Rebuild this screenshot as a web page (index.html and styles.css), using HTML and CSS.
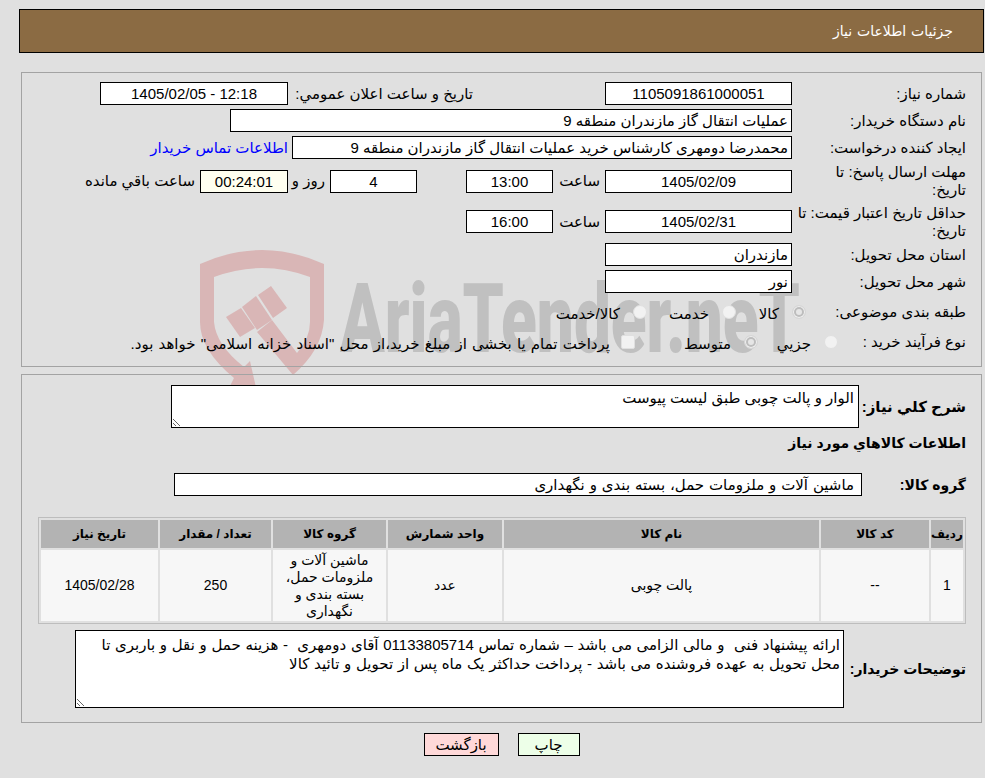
FILE: index.html
```html
<!DOCTYPE html>
<html lang="fa" dir="rtl">
<head>
<meta charset="utf-8">
<title>جزئیات اطلاعات نیاز</title>
<link rel="stylesheet" href="styles.css">
</head>
<body>
<svg class="watermark" viewBox="0 0 985 778" aria-hidden="true">
  <path class="wm-pink" d="M200 264 Q262 236 324 264 L324 320 Q322 350 293 375 L257 332 L272 320 L297 353 Q310 338 310 322 L310 277 Q262 259 214 277 L214 322 Q216 345 244 367 L250 361 L257 392 L228 390 L234 378 Q200 350 200 322 Z"/>
  <path class="wm-pink" d="M226 317 L241 308 L255 328 L240 337 Z"/>
  <path class="wm-pink" d="M242 307 L256 296 L272 320 L257 330 Z"/>
  <path class="wm-pink" d="M258 295 L271 286 L287 308 L273 318 Z"/>
  <text class="wm-text" x="340" y="352" textLength="460" lengthAdjust="spacingAndGlyphs" direction="ltr">AriaTender.neT</text>
</svg>
<div class="page">
  <header class="title-bar"><h1 class="title">جزئیات اطلاعات نیاز</h1></header>
  <main class="content">
    <section class="panel panel-info">
      <div class="row">
        <div class="label">شماره نیاز:</div>
        <div class="field center w187">1105091861000051</div>
        <div class="pub-label">تاریخ و ساعت اعلان عمومي:</div>
        <div class="field center w188">12:18 - 1405/02/05</div>
      </div>
      <div class="row">
        <div class="label">نام دستگاه خریدار:</div>
        <div class="field w562">عملیات انتقال گاز مازندران منطقه 9</div>
      </div>
      <div class="row">
        <div class="label">ایجاد کننده درخواست:</div>
        <div class="field w500">محمدرضا دومهری کارشناس خرید عملیات انتقال گاز مازندران منطقه 9</div>
        <a class="contact" href="#">اطلاعات تماس خریدار</a>
      </div>
      <div class="row row-tall">
        <div class="label label-wrap">مهلت ارسال پاسخ: تا تاریخ:</div>
        <div class="field center w187">1405/02/09</div>
        <div class="time-label">ساعت</div>
        <div class="field center w87">13:00</div>
        <div class="field center w87 days">4</div>
        <div class="days-label">روز و</div>
        <div class="field center w88 remain">00:24:01</div>
        <div class="remain-label">ساعت باقي مانده</div>
      </div>
      <div class="row row-tall row-tall-2">
        <div class="label">حداقل تاریخ اعتبار قیمت: تا تاریخ:</div>
        <div class="field center w187">1405/02/31</div>
        <div class="time-label">ساعت</div>
        <div class="field center w87">16:00</div>
      </div>
      <div class="row">
        <div class="label">استان محل تحویل:</div>
        <div class="field w187">مازندران</div>
      </div>
      <div class="row">
        <div class="label">شهر محل تحویل:</div>
        <div class="field w187">نور</div>
      </div>
      <div class="row row-option row-first">
        <div class="label label-cat">طبقه بندی موضوعی:</div>
        <label class="opt opt-70"><input class="radio" type="radio" name="cat" checked disabled><span>کالا</span></label>
        <label class="opt opt-89"><input class="radio" type="radio" name="cat" disabled><span>خدمت</span></label>
        <label class="opt"><input class="radio" type="radio" name="cat" disabled><span>کالا/خدمت</span></label>
      </div>
      <div class="row row-option">
        <div class="label label-proc">نوع فرآیند خرید :</div>
        <label class="opt opt-80"><input class="radio" type="radio" name="proc" disabled><span>جزیي</span></label>
        <label class="opt opt-123"><input class="radio" type="radio" name="proc" checked disabled><span>متوسط</span></label>
        <label class="opt opt-long"><input class="check" type="checkbox" disabled><span>پرداخت تمام یا بخشی از مبلغ خرید،از محل "اسناد خزانه اسلامی" خواهد بود.</span></label>
      </div>
    </section>

    <section class="panel panel-goods">
      <div class="row row-desc">
        <div class="label-b">شرح کلي نیاز:</div>
        <textarea class="area area-desc" readonly>الوار و پالت چوبی طبق لیست پیوست</textarea>
      </div>
      <h2 class="section-head">اطلاعات کالاهاي مورد نیاز</h2>
      <div class="row row-group">
        <div class="label-b label-group">گروه کالا:</div>
        <div class="field w688 group-field">ماشین آلات و ملزومات حمل، بسته بندی و نگهداری</div>
      </div>
      <div class="table-wrap">
        <table class="goods">
          <colgroup>
            <col class="c-a"><col class="c-b"><col class="c-c"><col class="c-d"><col class="c-e"><col class="c-f"><col class="c-g">
          </colgroup>
          <thead>
            <tr><th>ردیف</th><th>کد کالا</th><th>نام کالا</th><th>واحد شمارش</th><th>گروه کالا</th><th>تعداد / مقدار</th><th>تاریخ نیاز</th></tr>
          </thead>
          <tbody>
            <tr><td>1</td><td>--</td><td>پالت چوبی</td><td>عدد</td><td>ماشین آلات و ملزومات حمل، بسته بندی و نگهداری</td><td>250</td><td>1405/02/28</td></tr>
          </tbody>
        </table>
      </div>
      <div class="row row-notes">
        <div class="label-b label-notes">توضیحات خریدار:</div>
        <textarea class="area area-notes" readonly>ارائه پیشنهاد فنی  و مالی الزامی می باشد – شماره تماس 01133805714 آقای دومهری  - هزینه حمل و نقل و باربری تا محل تحویل به عهده فروشنده می باشد - پرداخت حداکثر یک ماه پس از تحویل و تائید کالا</textarea>
      </div>
    </section>

    <div class="actions">
      <button class="btn btn-print" type="button">چاپ</button>
      <button class="btn btn-back" type="button">بازگشت</button>
    </div>
  </main>
</div>
</body>
</html>
```
FILE: styles.css
```css
* { box-sizing: border-box; }
html, body { margin: 0; padding: 0; height: 778px; overflow: hidden; }
body {
  position: relative;
  background: #e0e0e0;
  color: #000;
  font-family: "Liberation Sans", "DejaVu Sans", sans-serif;
  font-size: 15px;
}
.watermark { position: absolute; left: 0; top: 0; width: 985px; height: 778px; }
.wm-pink { fill: #d9b6b6; }
.wm-text { fill: #c0c0c0; font-family: Roboto, sans-serif; font-weight: 900; font-size: 97px; }
.page { position: relative; padding: 9px 1px 0 19px; }
.title-bar {
  height: 44px;
  background: #8b6b43;
  border: 1px solid #000;
  display: flex;
  align-items: center;
  padding-right: 30px;
}
.title { margin: 0; color: #fff; font-size: 14px; font-weight: 400; word-spacing: 1px; }
.content { margin: 19px 2px 0 2px; }
.panel { border: 1px solid #a3a3a3; display: flex; flex-direction: column; }
.panel-info { height: 295px; padding: 9px 15px 0 0; gap: 4px; }
.panel-goods { height: 349px; margin-top: 7px; padding: 10px 15px 0 0; }
.row { display: flex; align-items: center; height: 23px; }
.row-tall { height: 34px; margin: 1px 0; }
.row-tall-2 { height: 35px; margin-bottom: 0; }
.row-option { height: 26px; }
.row-first { margin-top: 2px; }
.label { width: 174px; line-height: 18px; flex: none; }
.label-wrap { padding-left: 14px; }
.label-cat { width: 160px; }
.label-proc { width: 128px; }
.field {
  height: 23px;
  line-height: 21px;
  background: #fff;
  border: 1px solid #000;
  padding: 0 3px;
  white-space: nowrap;
  overflow: hidden;
  flex: none;
}
.center { text-align: center; }
.w87 { width: 87px; }
.w88 { width: 88px; }
.w187 { width: 187px; }
.w188 { width: 188px; margin-right: 5px; }
.w500 { width: 500px; }
.w562 { width: 562px; }
.w688 { width: 688px; }
.pub-label { width: 180px; margin-right: 132px; white-space: nowrap; }
.contact { color: #0000ff; text-decoration: none; margin-right: 4px; white-space: nowrap; }
.time-label { width: 52px; padding-right: 5px; }
.days { margin-right: 49px; }
.days-label { width: 42px; padding-right: 5px; white-space: nowrap; }
.remain { background: #fffff0; }
.remain-label { margin-right: 5px; white-space: nowrap; }
.opt { display: flex; align-items: center; flex: none; white-space: nowrap; }
.opt span { margin-top: 3px; }
.opt-70 { width: 70px; }
.opt-80 { width: 80px; }
.opt-89 { width: 89px; }
.opt-123 { width: 123px; }
.opt-long { word-spacing: 1px; }
.radio, .check {
  appearance: none;
  width: 14px;
  height: 14px;
  margin: 0 0 0 13px;
  background: #f2f2f2;
  border: 1px solid #e0e0e0;
  flex: none;
}
.radio { border-radius: 50%; }
.radio:checked { background: #e6e6e6; border-color: #d6d6d6; box-shadow: inset 0 0 0 1px #f2f2f2, inset 0 0 0 3px #bdbdbd; }
.check { border-radius: 2px; margin-left: 11px; }
.label-b { font-weight: 700; font-size: 14px; white-space: nowrap; flex: none; }
.area {
  display: block;
  background: #fff;
  border: 1px solid #000;
  border-radius: 0;
  margin: 0;
  padding: 3px 4px;
  font: inherit;
  color: #000;
  outline: none;
}
.row-desc { height: 43px; }
.row-desc .label-b { width: 107px; font-size: 15px; }
.area-desc { width: 688px; height: 43px; }
.section-head { margin: 4px 0 0; height: 22px; line-height: 22px; font-size: 14px; font-weight: 700; }
.row-group { margin-top: 19px; }
.label-group { width: 104px; }
.group-field { padding-right: 7px; word-spacing: 0.7px; }
.table-wrap { margin: 21px 0 0; width: 928px; }
.goods { border-collapse: separate; border-spacing: 2px; border: 1px solid #bdbdbd; width: 928px; table-layout: fixed; }
.c-a { width: 32px; }
.c-b { width: 108px; }
.c-c { width: 315px; }
.c-d { width: 114px; }
.c-e { width: 113px; }
.c-f { width: 111px; }
.c-g { width: 117px; }
.goods th { background: #b3b3b3; height: 28px; padding: 0; font-size: 12px; font-weight: 700; text-align: center; }
.goods td { background: #f7f7f7; height: 71px; padding: 0 6px; font-size: 14px; line-height: 17px; text-align: center; }
.row-notes { height: 78px; margin-top: 6px; }
.row-notes .label-b { width: 122px; }
.area-notes { width: 769px; height: 78px; font-size: 15px; word-spacing: 0.5px; line-height: 19px; padding: 4px 3px 2px 8px; }
.actions { display: flex; justify-content: center; gap: 19px; margin-top: 10px; }
.btn {
  height: 23px;
  border: 1px solid #000;
  border-radius: 0;
  font: inherit;
  padding: 0;
  color: #000;
}
.btn-print { width: 62px; background: #edffe8; }
.btn-back { width: 75px; background: #ffd9d9; }
```
